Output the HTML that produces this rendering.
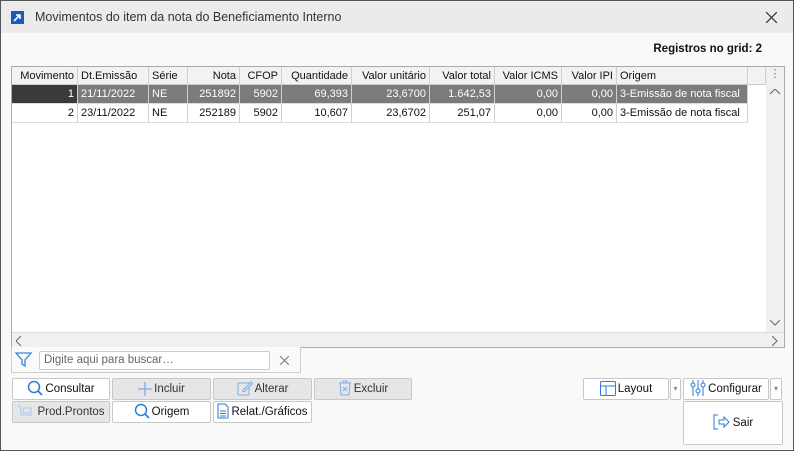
<!DOCTYPE html><html><head><style>
*{margin:0;padding:0;box-sizing:border-box}
body{width:794px;height:451px;font-family:"Liberation Sans",sans-serif;font-size:11px;color:#111;background:#fff;position:relative;overflow:hidden}
.win{position:absolute;left:0;top:0;width:794px;height:451px;border:1px solid #555;background:#f9f9f9}
.title{position:absolute;left:0;top:0;width:792px;height:32px;background:#ebebeb}
.title .t{position:absolute;left:34px;top:9px;font-size:12.5px;color:#333}
.ico{position:absolute;left:10px;top:10px;width:13px;height:13px;background:#1a5ab8}
.reg{position:absolute;right:31px;top:42px;font-weight:bold;font-size:11.5px}
.grid{position:absolute;left:10px;top:65px;width:774px;height:282px;border:1px solid #aaa;background:#fff}
.c{position:absolute;height:18px;line-height:18px;padding:0 3px;white-space:nowrap;border-right:1px solid #d0d0d0;overflow:hidden}
.r{text-align:right}
.hd{background:#f2f2f2;border-bottom:1px solid #ccc}
.sel{background:#7b7b7b;color:#fff}
.vs{position:absolute;right:0;top:0;width:18px;height:265px;background:#f0f0f0}
.hs{position:absolute;left:0;bottom:0;width:772px;height:15px;background:#f0f0f0;border-top:1px solid #ddd}
.btn{position:absolute;height:22px;border:1px solid #c8c8c8;border-radius:2px;background:#fff;text-align:center;line-height:20px;font-size:11.5px}
.btn svg{vertical-align:-4px;margin-right:2px}
.dis{background:#e6e6e6;color:#333}
</style></head><body><div class="win">
<div class="title"><div class="ico"><svg width="13" height="13"><path d="M3 10L9 4M5 4h4v4" stroke="#fff" stroke-width="1.6" fill="none"/></svg></div><div class="t">Movimentos do item da nota do Beneficiamento Interno</div>
<svg style="position:absolute;right:16px;top:11px" width="11" height="11"><path d="M0 0L11 11M11 0L0 11" stroke="#333" stroke-width="1.2"/></svg></div>
<div class="reg">Registros no grid: 2</div>
<div class="grid">
<div id="g"></div>
<div class="vs"><div style="text-align:center;color:#4a7bd0;line-height:8px;margin-top:3px">⋮</div>
<svg style="position:absolute;left:4px;top:22px" width="10" height="6"><path d="M0 5L5 0L10 5" stroke="#666" fill="none"/></svg>
<svg style="position:absolute;left:4px;bottom:6px" width="10" height="6"><path d="M0 0L5 5L10 0" stroke="#666" fill="none"/></svg></div>
<div class="hs"><svg style="position:absolute;left:4px;top:3px" width="6" height="10"><path d="M5 0L0 5L5 10" stroke="#666" fill="none"/></svg><svg style="position:absolute;left:760px;top:3px" width="6" height="10"><path d="M0 0L5 5L0 10" stroke="#666" fill="none"/></svg></div>
</div>
<div style="position:absolute;left:10px;top:346px;width:290px;height:26px;border:1px solid #ccc;border-top:none;background:#fafafa"></div>
<svg style="position:absolute;left:14px;top:351px" width="18" height="16"><path d="M1 1h15l-6 7v6l-3-2v-4z" fill="none" stroke="#3a86d8" stroke-width="1.3"/></svg>
<div style="position:absolute;left:38px;top:350px;width:231px;height:19px;border:1px solid #ccc;border-radius:2px;background:#fff;color:#666;padding-left:4px;line-height:17px;font-size:11.5px">Digite aqui para buscar…</div>
<svg style="position:absolute;left:279px;top:355px" width="9" height="9"><path d="M0 0L9 9M9 0L0 9" stroke="#777"/></svg>
<div class="btn" style="left:11px;top:377px;width:98px"><svg width="16" height="16"><circle cx="7" cy="7" r="5.5" fill="none" stroke="#2b7bd6" stroke-width="1.5"/><path d="M11 11L15 15" stroke="#2b7bd6" stroke-width="1.6"/></svg>Consultar</div>
<div class="btn dis" style="left:111px;top:377px;width:99px"><svg width="14" height="14"><path d="M7 0V14M0 7H14" stroke="#7aaee8" stroke-width="1.3"/></svg>Incluir</div>
<div class="btn dis" style="left:212px;top:377px;width:99px"><svg width="16" height="16"><rect x="1" y="3" width="11" height="12" rx="1" fill="none" stroke="#7aaee8"/><path d="M6 10L14 2L15.5 3.5L7.5 11.5H6z" fill="#e6e6e6" stroke="#7aaee8"/></svg>Alterar</div>
<div class="btn dis" style="left:313px;top:377px;width:98px"><svg width="14" height="16"><path d="M1 3H13M5 3V1H9V3M2 3L3 15H11L12 3" fill="none" stroke="#7aaee8"/><path d="M5 7L9 11M9 7L5 11" stroke="#7aaee8"/></svg>Excluir</div>
<div class="btn dis" style="left:11px;top:400px;width:98px"><svg width="18" height="14"><path d="M1 1H3L4 10H15M6 3H14V8H6z" fill="none" stroke="#a8c7ee"/></svg>Prod.Prontos</div>
<div class="btn" style="left:111px;top:400px;width:99px"><svg width="16" height="16"><circle cx="7" cy="7" r="5.5" fill="none" stroke="#2b7bd6" stroke-width="1.5"/><path d="M11 11L15 15" stroke="#2b7bd6" stroke-width="1.6"/></svg>Origem</div>
<div class="btn" style="left:212px;top:400px;width:99px"><svg width="12" height="16"><path d="M1 1H8L11 4V15H1z" fill="none" stroke="#2b7bd6"/><path d="M3 8H9M3 10.5H9M3 13H9" stroke="#2b7bd6"/></svg>Relat./Gráficos</div>
<div class="btn" style="left:582px;top:377px;width:86px"><svg width="16" height="15"><rect x="0.5" y="0.5" width="15" height="14" rx="1" fill="none" stroke="#2b7bd6"/><path d="M0 5H16M6 5V15" stroke="#2b7bd6"/></svg>Layout</div>
<div class="btn" style="left:669px;top:377px;width:11px;font-size:8px;color:#888">▾</div>
<div class="btn" style="left:682px;top:377px;width:86px"><svg width="16" height="16"><path d="M3 0V16M8 0V16M13 0V16" stroke="#2b7bd6"/><circle cx="3" cy="5" r="2" fill="#fff" stroke="#2b7bd6"/><circle cx="8" cy="11" r="2" fill="#fff" stroke="#2b7bd6"/><circle cx="13" cy="5" r="2" fill="#fff" stroke="#2b7bd6"/></svg>Configurar</div>
<div class="btn" style="left:769px;top:377px;width:12px;font-size:8px;color:#888">▾</div>
<div class="btn" style="left:682px;top:400px;width:100px;height:44px;line-height:42px"><svg width="18" height="16"><path d="M5 1H1V15H5" fill="none" stroke="#2b7bd6"/><path d="M6 6H11V3L16 8L11 13V10H6z" fill="none" stroke="#2b7bd6"/></svg>Sair</div>
</div>
<script>
var cols=[[0,66,'Movimento',1],[66,71,'Dt.Emissão',0],[137,39,'Série',0],[176,52,'Nota',1],[228,42,'CFOP',1],[270,70,'Quantidade',1],[340,78,'Valor unitário',1],[418,65,'Valor total',1],[483,67,'Valor ICMS',1],[550,55,'Valor IPI',1],[605,131,'Origem',0],[736,18,'',0]];
var rows=[['1','21/11/2022','NE','251892','5902','69,393','23,6700','1.642,53','0,00','0,00','3-Emissão de nota fiscal',''],['2','23/11/2022','NE','252189','5902','10,607','23,6702','251,07','0,00','0,00','3-Emissão de nota fiscal','']];
var h='';
cols.forEach(function(c,i){h+='<div class="c hd'+(c[3]?' r':'')+'" style="left:'+c[0]+'px;top:0;width:'+c[1]+'px">'+c[2]+'</div>';
rows.forEach(function(r,j){if(i==11)return;var cl=j==0&&i>0?' sel':'';var bg=j==0&&i==0?'background:#3a3a3a;color:#fff;':'';h+='<div class="c'+(c[3]?' r':'')+cl+'" style="'+bg+'left:'+c[0]+'px;top:'+(18+j*19)+'px;width:'+c[1]+'px;height:19px;line-height:19px;border-bottom:1px solid #ddd">'+r[i]+'</div>';});});
document.getElementById('g').innerHTML=h;
</script>
</body></html>
